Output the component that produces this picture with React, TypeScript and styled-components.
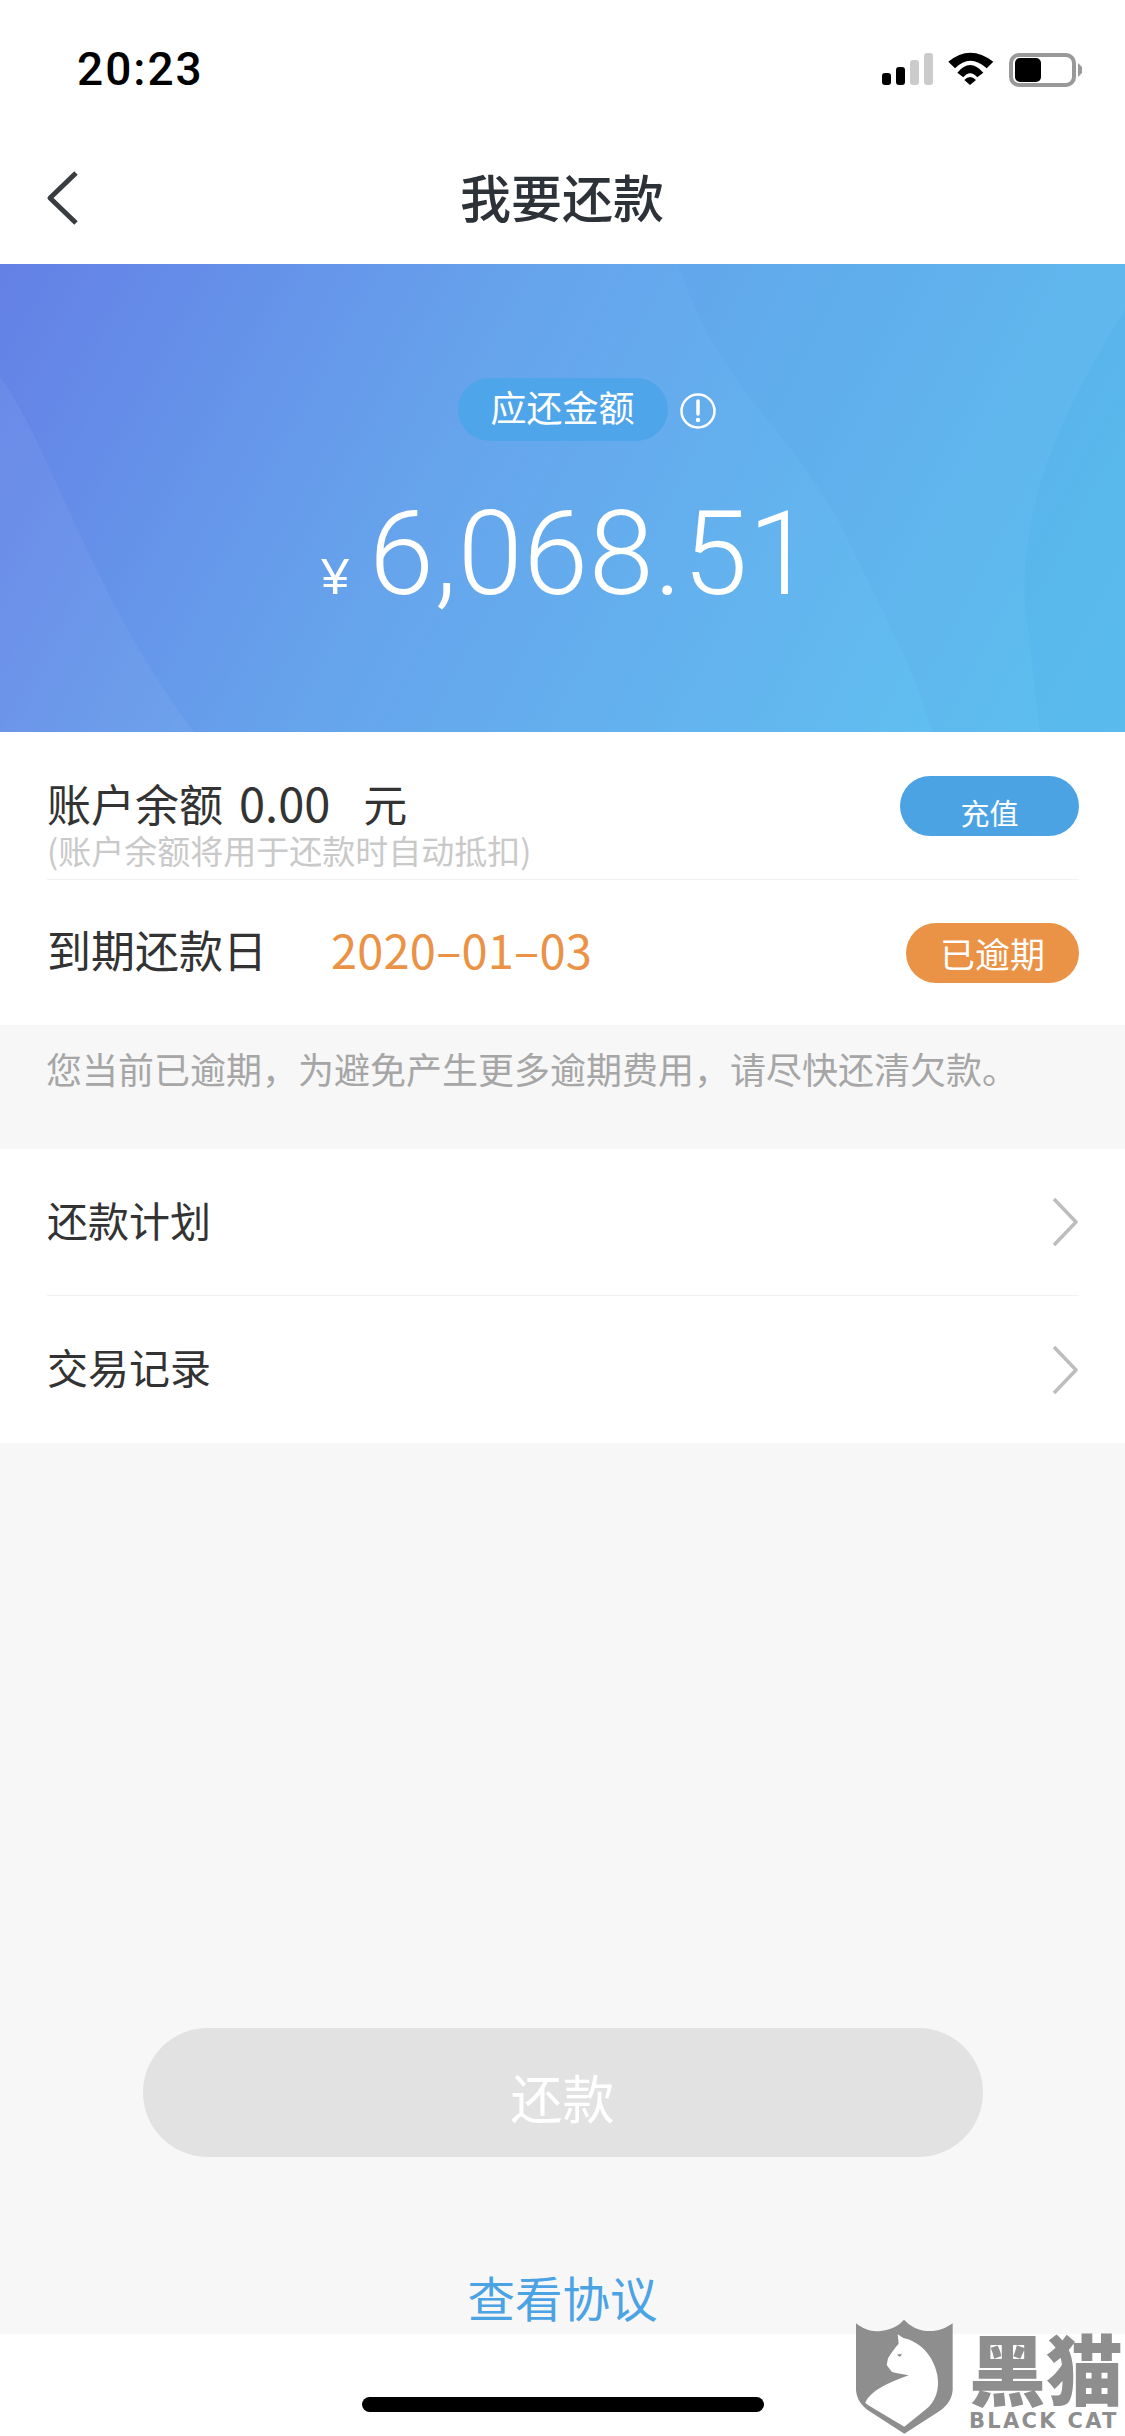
import React from "react";
import styled, { createGlobalStyle } from "styled-components";

const CJK = `"Noto Sans CJK SC", "Liberation Sans", sans-serif`;

const GlobalStyle = createGlobalStyle`
  html, body {
    margin: 0;
    padding: 0;
    background: #fff;
  }
  * {
    box-sizing: border-box;
  }
`;

const Page = styled.div`
  position: relative;
  display: flex;
  flex-direction: column;
  width: 1125px;
  height: 2436px;
  overflow: hidden;
  font-family: ${CJK};
  background: #fff;
`;

const StatusBar = styled.div`
  display: flex;
  justify-content: space-between;
  height: 132px;
  padding: 52px 43px 0 77px;
`;
const Clock = styled.span`
  font-family: Roboto, sans-serif;
  font-size: 46px;
  font-weight: 500;
  line-height: 34px;
  letter-spacing: 2px;
  color: #000;
`;

const NavBar = styled.div`
  display: grid;
  grid-template-columns: 1fr auto 1fr;
  align-items: center;
  height: 132px;
  padding: 0 47px 0 46px;
`;
const NavTitle = styled.span`
  font-size: 51px;
  font-weight: 500;
  line-height: 60px;
  color: #2c3238;
  margin-top: -5px;
`;

const Banner = styled.div`
  position: relative;
  display: flex;
  flex-direction: column;
  align-items: center;
  height: 468px;
  padding-top: 114px;
  background: linear-gradient(118deg, #6480e6 0%, #66a4ec 40%, #5fc6f1 100%);
`;
const BannerShapes = styled.svg`
  position: absolute;
  inset: 0;
`;
const LabelRow = styled.div`
  position: relative;
  display: grid;
  grid-template-columns: 1fr auto 1fr;
  align-items: center;
  width: 100%;
`;
const LabelPill = styled.span`
  grid-column: 2;
  width: 210px;
  height: 63px;
  border-radius: 32px;
  background: #4fa5ea;
  color: #fff;
  font-size: 36px;
  line-height: 56px;
  text-align: center;
`;
const InfoIcon = styled.svg`
  justify-self: start;
  margin: 3px 0 0 12px;
`;
const AmountRow = styled.div`
  position: relative;
  display: flex;
  align-items: baseline;
  gap: 20px;
  margin: 48px 0 0 10px;
  color: #fff;
  font-family: "Liberation Sans", sans-serif;
`;
const Currency = styled.span`
  font-size: 50px;
  line-height: 40px;
`;
const Amount = styled.span`
  font-family: Roboto, "Liberation Sans", sans-serif;
  font-size: 117px;
  font-weight: 300;
  line-height: 130px;
  letter-spacing: 0.6px;
`;

const InfoSection = styled.div`
  padding: 0 46px 0 47px;
`;
const InfoRow = styled.div<{ $height: number; $divider?: boolean }>`
  display: flex;
  justify-content: space-between;
  align-items: center;
  height: ${(p) => p.$height}px;
  border-bottom: ${(p) => (p.$divider ? "1px solid #f2f2f2" : "none")};
`;
const InfoMain = styled.div`
  display: flex;
  flex-direction: column;
  margin-top: 36px;
`;
const BalanceLine = styled.div`
  display: flex;
  align-items: baseline;
  gap: 16px;
  font-size: 44px;
  line-height: 50px;
  color: #333;
`;
const BalanceValue = styled.span`
  font-size: 47px;
`;
const BalanceUnit = styled.span`
  margin-left: 17px;
`;
const BalanceHint = styled.span`
  font-size: 33px;
  line-height: 40px;
  color: #c9c9c9;
  margin-top: 2px;
`;
const DueLine = styled.div`
  display: flex;
  align-items: center;
  gap: 64px;
  font-size: 44px;
  line-height: 50px;
  color: #333;
  margin-bottom: 8px;
`;
const DueDate = styled.span`
  font-size: 47px;
  letter-spacing: 0.2px;
  color: #ea9245;
`;
const Tag = styled.span<{ $width: number; $bg: string; $size: number; $pad: number }>`
  width: ${(p) => p.$width}px;
  height: 60px;
  border-radius: 30px;
  background: ${(p) => p.$bg};
  color: #fff;
  text-align: center;
  font-size: ${(p) => p.$size}px;
  line-height: 60px;
  padding-top: ${(p) => p.$pad}px;
`;

const Notice = styled.div`
  height: 124px;
  padding: 21px 0 0 46px;
  background: #f7f7f7;
  color: #a6a6a6;
  font-size: 36px;
  line-height: 44px;
`;

const MenuList = styled.div`
  padding: 0 46px 0 47px;
`;
const MenuRow = styled.div<{ $divider?: boolean }>`
  display: flex;
  justify-content: space-between;
  align-items: center;
  height: 147px;
  border-bottom: ${(p) => (p.$divider ? "1px solid #f2f2f2" : "none")};
  color: #333;
  font-size: 41px;
`;
const MenuLabel = styled.span`
  margin-bottom: 7px;
`;

const BottomArea = styled.div`
  flex: 1;
  display: flex;
  flex-direction: column;
  align-items: center;
  padding-top: 585px;
  background: #f7f7f7;
`;
const PayButton = styled.div`
  width: 840px;
  height: 129px;
  border-radius: 65px;
  background: #e2e2e2;
  color: #fff;
  font-size: 52px;
  line-height: 137px;
  text-align: center;
`;
const AgreementLink = styled.span`
  margin-top: 110px;
  font-size: 47.5px;
  line-height: 60px;
  color: #4ca3e4;
`;

const HomeArea = styled.div`
  display: flex;
  justify-content: center;
  height: 102px;
  padding-top: 63px;
`;
const HomeBar = styled.div`
  width: 402px;
  height: 15px;
  border-radius: 8px;
  background: #000;
`;

const Watermark = styled.div`
  position: absolute;
  left: 850px;
  top: 2315px;
  display: flex;
  color: #8e8e8e;
`;
const WatermarkText = styled.div`
  display: flex;
  flex-direction: column;
  margin-left: 9px;
`;
const WatermarkCn = styled.span`
  font-size: 77px;
  font-weight: 900;
  line-height: 76px;
  margin-top: 14px;
`;
const WatermarkEn = styled.span`
  font-family: "DejaVu Sans", sans-serif;
  font-size: 21px;
  font-weight: 700;
  line-height: 22px;
  letter-spacing: 2.3px;
  margin-top: 5px;
  white-space: nowrap;
`;

const StatusIcons = () => (
  <svg width="204" height="40" viewBox="0 0 204 40">
    <g fill="#000">
      <rect x="4" y="21" width="9" height="12" rx="3" />
      <rect x="18" y="15" width="9" height="18" rx="3" />
    </g>
    <g fill="#cbcbcb">
      <rect x="32" y="8" width="9" height="25" rx="3" />
      <rect x="46" y="1" width="9" height="32" rx="3" />
    </g>
    <g fill="#000">
      <path d="M70.300 9.700 Q92 -8.300 115.300 9.700 L108.700 16.300 Q92 1.100 77 16.300 Z" />
      <path d="M79.300 20.700 Q92 5.300 105.300 20.700 L99.300 25.300 Q92 17.300 85.300 25.300 Z" />
      <path d="M86.300 28 Q92 22 98 28 L92 33 Z" />
    </g>
    <rect x="133" y="3" width="63" height="30" rx="8" fill="none" stroke="#999" strokeWidth="4" />
    <rect x="137" y="6" width="26" height="24" rx="5" fill="#000" />
    <path d="M200 11 L204 15 L204 21 L200 25 Z" fill="#999" />
  </svg>
);

const BackIcon = () => (
  <svg width="32" height="56" viewBox="0 0 32 56">
    <path d="M30 3 L4 28 L30 53" fill="none" stroke="#3a3d40" strokeWidth="5" strokeLinejoin="round" />
  </svg>
);

const ChevronIcon = () => (
  <svg width="27" height="50" viewBox="0 0 27 50">
    <path d="M2 2 L24 25 L2 48" fill="none" stroke="#bdbdbd" strokeWidth="3.500" strokeLinejoin="round" />
  </svg>
);

const Shield = () => (
  <svg width="110" height="121" viewBox="0 0 330 363">
    <path
      d="M18 25 C40 42 65 52 92 48 C120 44 145 34 162 14 C180 34 205 46 232 48 C260 50 285 42 308 25 L308 225 C306 252 292 272 270 287 L163 356 L56 287 C34 272 20 252 18 225 Z"
      fill="#8e8e8e"
    />
    <path
      d="M143 58 L160 69 C205 78 250 118 262 180 C270 225 255 262 228 283 L163 335 L70 280 C58 272 48 268 46 262 C62 228 110 205 176 181 C160 176 142 176 125 170 L110 150 L114 130 C122 115 134 100 146 86 Z"
      fill="#fff"
    />
    <path d="M140 119 L156 116 L150 126 Z" fill="#8e8e8e" />
  </svg>
);

const App: React.FC = () => {
  return (
    <Page>
      <GlobalStyle />
      <StatusBar>
        <Clock>20:23</Clock>
        <StatusIcons />
      </StatusBar>
      <NavBar>
        <BackIcon />
        <NavTitle>我要还款</NavTitle>
      </NavBar>
      <Banner>
        <BannerShapes width="1125" height="468" viewBox="0 0 1125 468">
          <path d="M678 0 C720 130 800 170 850 280 C890 360 920 420 932 468 L1125 468 L1125 0 Z" fill="#4a98e4" opacity="0.1" />
          <path d="M1125 46 C1060 150 1020 240 1025 340 L1040 468 L1125 468 Z" fill="#46a8e8" opacity="0.16" />
          <path d="M0 113 C50 180 90 330 194 468 L0 468 Z" fill="#ffffff" opacity="0.05" />
        </BannerShapes>
        <LabelRow>
          <LabelPill>应还金额</LabelPill>
          <InfoIcon width="36" height="36" viewBox="0 0 36 36">
            <circle cx="18" cy="18" r="16.500" fill="none" stroke="#fff" strokeWidth="2.500" />
            <path d="M18 8 L18 21" stroke="#fff" strokeWidth="3.500" strokeLinecap="round" />
            <circle cx="18" cy="27" r="2.200" fill="#fff" />
          </InfoIcon>
        </LabelRow>
        <AmountRow>
          <Currency>¥</Currency>
          <Amount>6,068.51</Amount>
        </AmountRow>
      </Banner>
      <InfoSection>
        <InfoRow $height={148} $divider>
          <InfoMain>
            <BalanceLine>
              <span>账户余额</span>
              <BalanceValue>0.00</BalanceValue>
              <BalanceUnit>元</BalanceUnit>
            </BalanceLine>
            <BalanceHint>(账户余额将用于还款时自动抵扣)</BalanceHint>
          </InfoMain>
          <Tag $width={179} $bg="#4ca3e4" $size={29} $pad={6}>
            充值
          </Tag>
        </InfoRow>
        <InfoRow $height={145}>
          <DueLine>
            <span>到期还款日</span>
            <DueDate>2020–01–03</DueDate>
          </DueLine>
          <Tag $width={173} $bg="#ea9245" $size={35} $pad={0}>
            已逾期
          </Tag>
        </InfoRow>
      </InfoSection>
      <Notice>您当前已逾期，为避免产生更多逾期费用，请尽快还清欠款。</Notice>
      <MenuList>
        <MenuRow $divider>
          <MenuLabel>还款计划</MenuLabel>
          <ChevronIcon />
        </MenuRow>
        <MenuRow>
          <MenuLabel>交易记录</MenuLabel>
          <ChevronIcon />
        </MenuRow>
      </MenuList>
      <BottomArea>
        <PayButton>还款</PayButton>
        <AgreementLink>查看协议</AgreementLink>
      </BottomArea>
      <HomeArea>
        <HomeBar />
      </HomeArea>
      <Watermark>
        <Shield />
        <WatermarkText>
          <WatermarkCn>黑猫</WatermarkCn>
          <WatermarkEn>BLACK CAT</WatermarkEn>
        </WatermarkText>
      </Watermark>
    </Page>
  );
};

export default App;
